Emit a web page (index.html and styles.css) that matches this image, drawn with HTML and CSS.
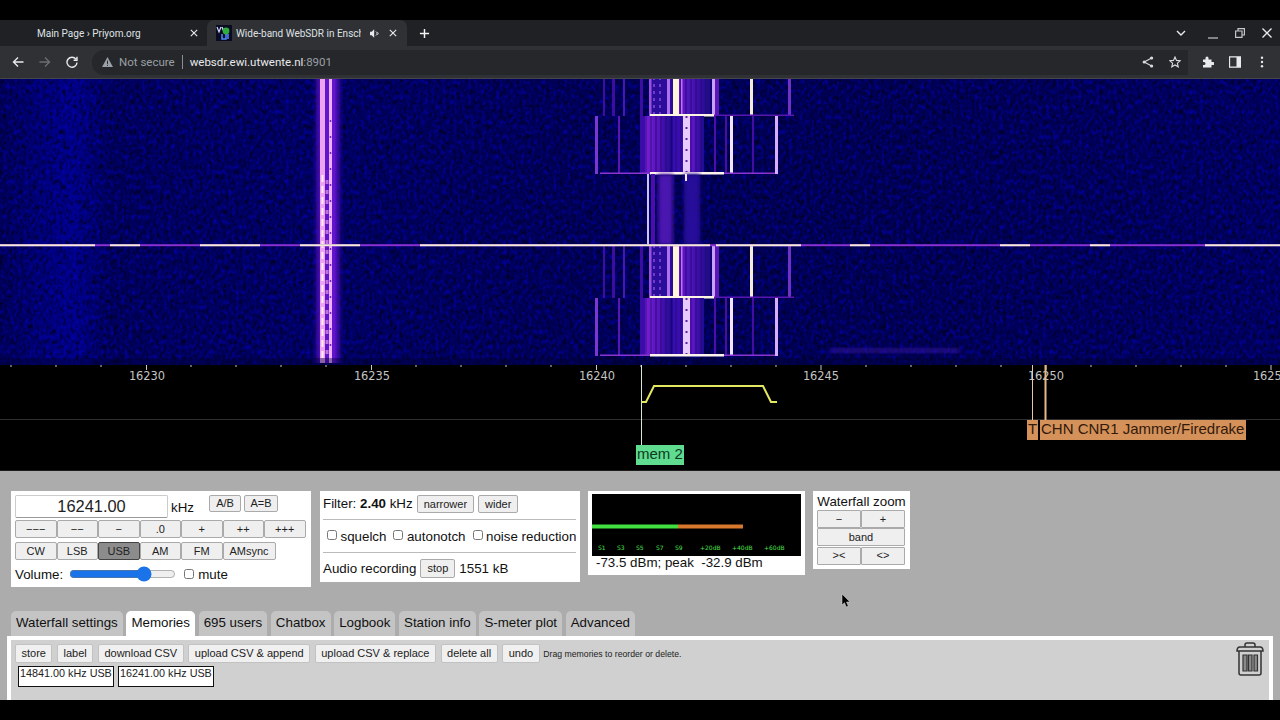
FILE: index.html
```html
<!DOCTYPE html>
<html lang="en">
<head>
<meta charset="utf-8">
<title>Wide-band WebSDR in Enschede</title>
<link rel="stylesheet" href="styles.css">
</head>
<body>
<div class="letterbox-top"></div>
<header class="tabstrip">
  <div class="tab">
    <span class="tab-title">Main Page › Priyom.org</span>
    <svg class="ico" viewBox="0 0 10 10"><path d="M1 1l8 8M9 1l-8 8" class="st-w"/></svg>
  </div>
  <div class="tab tab-active">
    <svg class="favicon" viewBox="0 0 16 16"><rect width="16" height="16" fill="#0a0a20"/><path d="M1 2l2 5 2-5M6 2l2 5" fill="none" stroke="#cfd8ff" stroke-width="1.2"/><circle cx="10" cy="6" r="3.4" fill="#2fae3f"/><path d="M6 9v5h4V9M12 9v5" fill="none" stroke="#4f8cff" stroke-width="1.5"/></svg>
    <span class="tab-title tab-title-active">Wide-band WebSDR in Enschede</span>
    <svg class="speaker" viewBox="0 0 12 10"><path d="M0 3h2l3-3v10L2 7H0z" fill="#e8eaed"/><path d="M7 2.500a3 3 0 010 5M9 3.500a2 2 0 010 3" stroke="#e8eaed" fill="none"/></svg>
    <svg class="ico" viewBox="0 0 10 10"><path d="M1 1l8 8M9 1l-8 8" class="st-w"/></svg>
  </div>
  <svg class="newtab" viewBox="0 0 12 12"><path d="M6 1v10M1 6h10" class="st-w2"/></svg>
  <div class="winctl">
    <svg class="w-ico" viewBox="0 0 10 6"><path d="M1 1l4 4 4-4" class="st-w"/></svg>
    <svg class="w-ico w-min" viewBox="0 0 10 10"><path d="M0 9h10" class="st-g"/></svg>
    <svg class="w-ico" viewBox="0 0 10 10"><path d="M3 3V.6h6.400V7H7M.6 3H7v6.400H.6z" class="st-g" fill="none"/></svg>
    <svg class="w-ico" viewBox="0 0 10 10"><path d="M.5.5l9 9M9.500.5l-9 9" class="st-w"/></svg>
  </div>
</header>
<nav class="toolbar">
  <svg class="nav" viewBox="0 0 12 12"><path d="M11.500 6H1.500M6 1.500L1.500 6 6 10.500" class="st-w"/></svg>
  <svg class="nav" viewBox="0 0 12 12"><path d="M.5 6h10M6 1.500L10.500 6 6 10.500" class="st-dim"/></svg>
  <svg class="nav" viewBox="0 0 12 12"><path d="M10 3.200A5 5 0 1011 6.500M11 .8v3.400H7.600" class="st-w" fill="none"/></svg>
  <div class="omnibox">
    <svg class="warn" viewBox="0 0 12 11"><path d="M6 0l6 11H0z" fill="#9aa0a6"/><path d="M6 4v3.600M6 8.600v1.200" stroke="#2a2b2e" stroke-width="1.100"/></svg>
    <span class="notsecure">Not secure</span>
    <span class="sep"></span>
    <span class="url">websdr.ewi.utwente.nl<span class="port">:8901</span></span>
    <span class="spacer"></span>
    <svg class="om-ico" viewBox="0 0 12 12"><circle cx="9.600" cy="2" r="1.600" fill="#dadce0"/><circle cx="2.200" cy="6" r="1.600" fill="#dadce0"/><circle cx="9.600" cy="10" r="1.600" fill="#dadce0"/><path d="M9.600 2L2.200 6l7.400 4" fill="none" stroke="#dadce0" stroke-width="1.100"/></svg>
    <svg class="om-ico" viewBox="0 0 12 12"><path d="M6 1l1.500 3.400 3.700.4-2.800 2.400.8 3.600L6 9l-3.200 1.800.8-3.600L.8 4.800l3.700-.4z" fill="none" stroke="#dadce0" stroke-width="1.100"/></svg>
  </div>
  <svg class="tb-ico" viewBox="0 0 12 12"><path d="M1 3.500h2.500V2a1.500 1.500 0 013 0v1.500H9.500V6H11a1.500 1.500 0 010 3H9.500v2.500H1V9h1a1.500 1.500 0 000-3H1z" fill="#e8eaed"/></svg>
  <svg class="tb-ico" viewBox="0 0 12 12"><path d="M.5.800h11v10.400H.5z" fill="none" stroke="#e8eaed" stroke-width="1.300"/><rect x="7.500" y="1" width="4" height="10" fill="#e8eaed"/></svg>
  <svg class="tb-ico" viewBox="0 0 12 12"><circle cx="6" cy="1.800" r="1.200" fill="#e8eaed"/><circle cx="6" cy="6" r="1.200" fill="#e8eaed"/><circle cx="6" cy="10.200" r="1.200" fill="#e8eaed"/></svg>
</nav>
<svg class="waterfall" viewBox="0 79 1280 286" preserveAspectRatio="none">
  <defs>
    <linearGradient id="glow" x1="0" x2="1" y1="0" y2="0">
      <stop offset="0" stop-color="#2a0ca0" stop-opacity="0"/>
      <stop offset=".28" stop-color="#6012c8"/>
      <stop offset=".72" stop-color="#6012c8"/>
      <stop offset="1" stop-color="#2a0ca0" stop-opacity="0"/>
    </linearGradient>
    <linearGradient id="hump" x1="0" x2="1" y1="0" y2="0">
      <stop offset="0" stop-color="#7a20d8"/>
      <stop offset=".5" stop-color="#5414b8"/>
      <stop offset="1" stop-color="#1c0890"/>
    </linearGradient>
    <linearGradient id="hump2" x1="0" x2="1" y1="0" y2="0">
      <stop offset="0" stop-color="#6a18d0"/>
      <stop offset="1" stop-color="#200a90"/>
    </linearGradient>
    <linearGradient id="hump3" x1="0" x2="1" y1="0" y2="0">
      <stop offset="0" stop-color="#6216c8"/>
      <stop offset=".6" stop-color="#3c10a8"/>
      <stop offset="1" stop-color="#160680"/>
    </linearGradient>
    <linearGradient id="side" x1="0" x2="1" y1="0" y2="0">
      <stop offset="0" stop-color="#000058"/>
      <stop offset=".035" stop-color="#00007c"/>
      <stop offset=".058" stop-color="#000090"/>
      <stop offset=".085" stop-color="#00005c"/>
      <stop offset=".24" stop-color="#000064"/>
      <stop offset=".47" stop-color="#000056"/>
      <stop offset=".7" stop-color="#000054"/>
      <stop offset="1" stop-color="#000060"/>
    </linearGradient>
    <pattern id="stripes" width="5" height="10" patternUnits="userSpaceOnUse">
      <rect width="2" height="10" fill="#12005a"/>
    </pattern>
    <filter id="noise" x="0" y="0" width="100%" height="100%" color-interpolation-filters="sRGB">
      <feTurbulence type="fractalNoise" baseFrequency="0.3 0.2" numOctaves="2" seed="4"/>
      <feColorMatrix values="0 0 0 0 0  0 0 0 0 0  0 0 0 0 0.12  2.2 0 0 0 -0.95"/>
      <feGaussianBlur stdDeviation="0.6"/>
    </filter>
    <filter id="noise2" x="0" y="0" width="100%" height="100%" color-interpolation-filters="sRGB">
      <feTurbulence type="fractalNoise" baseFrequency="0.28 0.2" numOctaves="2" seed="11"/>
      <feColorMatrix values="0 0 0 0 0.02  0 0 0 0 0  0 0 0 0 0.72  2.2 0 0 0 -1"/>
      <feGaussianBlur stdDeviation="0.6"/>
    </filter>
    <filter id="soft"><feGaussianBlur stdDeviation="0.75"/></filter>
    <filter id="soft2"><feGaussianBlur stdDeviation="2"/></filter>
    <g id="bandA">
      <rect x="603" width="2" height="53" fill="#3c10a0"/>
      <rect x="612" width="3" height="53" fill="#3c10a0"/>
      <rect x="623" width="2" height="53" fill="#4a12b0"/>
      <rect x="640" width="3" height="53" fill="#3a10a0"/>
      <rect x="650" width="26" height="53" fill="#2a0a98"/>
      <rect x="649" width="2.500" height="53" fill="#9a50e0"/>
      <path d="M654 0v53M660 0v53" stroke="#8a48e0" stroke-width="1.500" stroke-dasharray="3 4"/>
      <rect x="667" width="3" height="53" fill="#b070f0"/>
      <rect x="673" width="6" height="53" fill="#fff6d8"/>
      <rect x="679" width="33" height="53" fill="url(#hump3)"/>
      <rect x="679" width="33" height="53" fill="url(#stripes)" opacity=".3"/>
      <rect x="681" width="1.500" height="53" fill="#c070f0"/>
      <rect x="712" width="3" height="53" fill="#c8a0f8"/>
      <rect x="715" width="4" height="53" fill="#5a14b8"/>
      <rect x="750" width="3" height="53" fill="#f4ecd8"/>
      <rect x="788" width="3" height="53" fill="#7030c0"/>
      <rect x="650" y="51" width="64" height="2.500" fill="#fff6e4"/>
      <rect x="714" y="51.500" width="80" height="1.500" fill="#5a14b0"/>
    </g>
    <g id="bandB">
      <rect x="595" width="3" height="58" fill="#7a38d0"/>
      <rect x="618" width="2" height="58" fill="#5a18b0"/>
      <rect x="640" width="5" height="58" fill="#3a10a8"/>
      <rect x="645" width="28" height="58" fill="url(#hump)"/>
      <rect x="673" width="10" height="58" fill="#3a10b0"/>
      <rect x="645" width="38" height="58" fill="url(#stripes)" opacity=".3"/>
      <rect x="683" width="7" height="58" fill="#e8ccff"/>
      <path d="M686.500 0v58" stroke="#5a20a0" stroke-width="2" stroke-dasharray="2 9"/>
      <rect x="690" width="14" height="58" fill="url(#hump2)"/>
      <rect x="690" width="14" height="58" fill="url(#stripes)" opacity=".3"/>
      <rect x="714" width="2" height="58" fill="#5010a8"/>
      <rect x="725" width="2" height="58" fill="#4a10a0"/>
      <rect x="730" width="3" height="58" fill="#f2e6ff"/>
      <rect x="752" width="2" height="58" fill="#4210a0"/>
      <rect x="775" width="3" height="58" fill="#d8acff"/>
      <rect x="600" y="56.500" width="175" height="1.500" fill="#8a34d0"/>
      <rect x="650" y="56" width="74" height="2.500" fill="#fff4ec"/>
    </g>
  </defs>
  <rect y="79" width="1280" height="286" fill="url(#side)"/>
  <rect y="79" width="1280" height="286" filter="url(#noise)"/>
  <rect y="79" width="1280" height="286" filter="url(#noise2)" opacity=".8"/>
  <g filter="url(#soft)">
    <rect x="312" y="79" width="32" height="284" fill="url(#glow)"/>
    <rect x="320" y="79" width="5" height="284" fill="#eca4f2"/>
    <rect x="329" y="79" width="3" height="284" fill="#eeb0ff"/>
    <path d="M322.500 175v185" stroke="#ffeee8" stroke-width="2" stroke-dasharray="7 4"/>
    <path d="M327 180v180" stroke="#c070e0" stroke-width="3" stroke-dasharray="4 6"/>
    <path d="M330.500 120v240" stroke="#7a20c0" stroke-width="1.500" stroke-dasharray="2 14"/>
    <use href="#bandA" y="63"/>
    <use href="#bandB" y="116"/>
    <rect x="647" y="174" width="2" height="71" fill="#cfc0ff"/>
    <rect x="651" y="174" width="4" height="71" fill="#4a10b0"/>
    <rect x="658" y="174" width="15" height="71" fill="#4a12b0" filter="url(#soft2)"/>
    <rect x="684" y="174" width="16" height="71" fill="#26089a" filter="url(#soft2)"/>
    <rect x="685" y="174" width="2" height="7" fill="#f4ecff"/>
    <use href="#bandA" y="245"/>
    <use href="#bandB" y="298"/>
    <rect x="830" y="348" width="130" height="5" fill="#3a10a8" opacity=".6" filter="url(#soft2)"/>
    <rect y="244.200" width="1280" height="2" fill="#8a30d0"/>
    <path d="M0 245.200h95M110 245.200h30M200 245.200h60M300 245.200h60M420 245.200h290M716 245.200h85M850 245.200h20M1000 245.200h30M1090 245.200h20M1205 245.200h75" stroke="#f4ead8" stroke-width="2"/>
  </g>
  <rect y="358" width="1280" height="7" fill="#000030" opacity=".4"/>
</svg>
<section class="scale">
  <svg class="scale-svg" viewBox="0 365 1280 105">
    <path class="minor" d="M11 365v2M56 365v2M101 365v2M191 365v2M236 365v2M281 365v2M326 365v2M416 365v2M461 365v2M506 365v2M551 365v2M641 365v2M686 365v2M731 365v2M776 365v2M866 365v2M911 365v2M956 365v2M1001 365v2M1091 365v2M1136 365v2M1181 365v2M1226 365v2"/>
    <path class="minor" d="M146.500 365v5M371.500 365v5M596.500 365v5M821 365v5M1046 365v5M1271 365v5"/>
    <g class="scale-text">
      <text x="147" y="380">16230</text>
      <text x="372" y="380">16235</text>
      <text x="597" y="380">16240</text>
      <text x="821" y="380">16245</text>
      <text x="1046" y="380">16250</text>
      <text x="1271" y="380">16255</text>
    </g>
    <path d="M0 419.500h1280" stroke="#2e2e2e"/>
    <path d="M641.500 365v80" stroke="#d8e8d8"/>
    <path d="M1032.500 365v55" stroke="#e8c8a8"/>
    <path d="M1045.500 365v55" stroke="#e8b888" stroke-width="2"/>
    <path d="M641.500 402H646L654 386H763L771 402H777" fill="none" stroke="#e4e860" stroke-width="2"/>
  </svg>
  <span class="station station-mem">mem 2</span>
  <span class="station station-t">T</span>
  <span class="station station-chn">CHN CNR1 Jammer/Firedrake</span>
</section>
<main class="page">
  <div class="panels">
    <div class="panel panel-tune">
      <div class="row row-freq">
        <input class="freq" type="text" value="16241.00">
        <span class="khz">kHz</span>
        <button class="btn">A/B</button>
        <button class="btn">A=B</button>
      </div>
      <div class="grid7">
        <button class="btn">−−−</button><button class="btn">−−</button><button class="btn">−</button><button class="btn">.0</button><button class="btn">+</button><button class="btn">++</button><button class="btn">+++</button>
      </div>
      <div class="grid7 grid-modes">
        <button class="btn">CW</button><button class="btn">LSB</button><button class="btn btn-on">USB</button><button class="btn">AM</button><button class="btn">FM</button><button class="btn btn-wide">AMsync</button>
      </div>
      <div class="row row-vol">
        <span>Volume:</span>
        <input class="vol" type="range" min="0" max="100" value="73">
        <label class="chk chk-mute"><input type="checkbox">mute</label>
      </div>
    </div>
    <div class="panel panel-filter">
      <div class="row row-filter">
        <span>Filter: <b>2.40</b> kHz</span>
        <button class="btn">narrower</button>
        <button class="btn">wider</button>
      </div>
      <hr>
      <div class="row row-checks">
        <label class="chk"><input type="checkbox">squelch</label>
        <label class="chk"><input type="checkbox">autonotch</label>
        <label class="chk"><input type="checkbox">noise reduction</label>
      </div>
      <hr class="hr-flush">
      <div class="row row-rec">
        <span>Audio recording</span>
        <button class="btn btn-stop">stop</button>
        <span>1551 kB</span>
      </div>
    </div>
    <div class="panel panel-meter">
      <svg class="smeter" viewBox="0 0 209 62">
        <rect width="209" height="62" fill="#000"/>
        <rect y="30.500" width="86" height="4" fill="#3fe03f"/>
        <rect x="86" y="30.500" width="65" height="4" fill="#d8782c"/>
        <g class="meter-text">
          <text x="6" y="56">S1</text><text x="25" y="56">S3</text><text x="44" y="56">S5</text><text x="64" y="56">S7</text><text x="83" y="56">S9</text><text x="108" y="56">+20dB</text><text x="140" y="56">+40dB</text><text x="172" y="56">+60dB</text>
        </g>
      </svg>
      <div class="dbm">-73.5 dBm; peak&nbsp; -32.9 dBm</div>
    </div>
    <div class="panel panel-zoom">
      <div class="zoom-title">Waterfall zoom</div>
      <div class="zoom-grid">
        <button class="btn">−</button><button class="btn">+</button>
        <button class="btn btn-span">band</button>
        <button class="btn">&gt;&lt;</button><button class="btn">&lt;&gt;</button>
      </div>
    </div>
  </div>
  <div class="tabs">
    <span class="ptab">Waterfall settings</span>
    <span class="ptab ptab-on">Memories</span>
    <span class="ptab">695 users</span>
    <span class="ptab">Chatbox</span>
    <span class="ptab">Logbook</span>
    <span class="ptab">Station info</span>
    <span class="ptab">S-meter plot</span>
    <span class="ptab">Advanced</span>
  </div>
  <div class="memories">
    <div class="mem-actions">
      <button class="btn btn-mem">store</button>
      <button class="btn btn-mem">label</button>
      <button class="btn btn-mem">download CSV</button>
      <button class="btn btn-mem">upload CSV &amp; append</button>
      <button class="btn btn-mem">upload CSV &amp; replace</button>
      <button class="btn btn-mem">delete all</button>
      <button class="btn btn-mem">undo</button>
      <span class="hint">Drag memories to reorder or delete.</span>
    </div>
    <div class="mem-list">
      <div class="mem">14841.00 kHz USB</div>
      <div class="mem">16241.00 kHz USB</div>
    </div>
    <svg class="trash" viewBox="0 0 30 36"><path d="M10 6V4a2 2 0 012-2h6a2 2 0 012 2v2" fill="none" stroke="#333" stroke-width="1.500"/><path d="M2 10c0-3 1-4 3-4h20c2 0 3 1 3 4z" fill="none" stroke="#333" stroke-width="1.500"/><path d="M4 10v22a2 2 0 002 2h18a2 2 0 002-2V10" fill="none" stroke="#333" stroke-width="1.500"/><path d="M8 14h4v16H8zM13.500 14h3.500v16h-3.500zM19 14h3.500v16H19z" fill="#8a8a8a" stroke="#333" stroke-width="1.200"/></svg>
  </div>
  <svg class="cursor" viewBox="0 0 10 14"><path d="M1 0v11l2.500-2.300L5.300 13l2-.9-1.800-4.100H9z" fill="#000" stroke="#ddd" stroke-width=".5"/></svg>
</main>
<div class="letterbox-bottom"></div>
</body>
</html>
```
FILE: styles.css
```css
* { box-sizing: border-box; }
html, body { margin: 0; height: 720px; overflow: hidden; background: #000; }
body { display: flex; flex-direction: column; font-family: "Liberation Sans", Arial, sans-serif; font-size: 13.33px; color: #111; }
svg { display: block; }
.letterbox-top { height: 20px; flex: none; }
.letterbox-bottom { height: 20px; flex: none; background: #000; }

.st-w { stroke: #e8eaed; stroke-width: 1.4; fill: none; }
.st-w2 { stroke: #f1f3f4; stroke-width: 1.6; fill: none; }
.st-g { stroke: #c4c7ca; stroke-width: 1.2; }
.st-dim { stroke: #6b6e72; stroke-width: 1.4; fill: none; }

.tabstrip { height: 26px; flex: none; display: flex; align-items: stretch; background: #202124; font-family: Roboto, sans-serif; font-size: 10px; }
.tab { width: 207px; display: flex; align-items: center; padding: 0 9px 0 37px; color: #dfe1e5; }
.tab-active { width: 200px; padding: 0 10px 0 9px; background: #303134; border-radius: 7px 7px 0 0; }
.tab-title { flex: 1; min-width: 0; white-space: nowrap; overflow: hidden; }
.tab-title-active { margin-left: 4px; }
.favicon { width: 16px; height: 16px; flex: none; }
.ico { width: 8px; height: 8px; flex: none; }
.speaker { width: 10px; height: 9px; flex: none; margin: 0 9px 0 9px; }
.newtab { width: 11px; height: 11px; align-self: center; margin-left: 12px; }
.winctl { margin-left: auto; display: flex; align-items: center; gap: 17px; padding-right: 8px; }
.w-ico { width: 10px; height: 10px; }
.w-ico:first-child { height: 6px; margin-right: 5px; }
.w-min { margin-top: 2px; }

.toolbar { height: 33px; flex: none; display: flex; align-items: center; background: #303134; border-bottom: 1px solid #44464a; padding: 0 12px; font-family: Roboto, sans-serif; font-size: 11.5px; }
.nav { width: 12px; height: 12px; flex: none; margin-right: 15px; }
.nav:nth-child(3) { margin-right: 14px; }
.omnibox { flex: none; width: 1096px; height: 25px; border-radius: 12px 0 0 12px; background: #26272a; display: flex; align-items: center; padding: 0 0 0 10px; }
.warn { width: 11px; height: 10px; flex: none; margin-right: 6px; }
.notsecure { color: #9aa0a6; }
.sep { width: 1px; height: 14px; background: #8a8d91; margin: 0 7px; }
.url { color: #e8eaed; }
.port { color: #9aa0a6; }
.spacer { flex: 1; }
.om-ico { width: 12px; height: 12px; margin-right: 15px; }
.om-ico:last-child { margin-right: 7px; }
.tb-ico { width: 12px; height: 12px; flex: none; margin: 0 1px 0 14px; }

.waterfall { width: 1280px; height: 286px; flex: none; }
.scale { height: 106px; flex: none; position: relative; background: #000; border-bottom: 1px solid #1d1d1d; }
.scale-svg { width: 1280px; height: 105px; }
.minor { stroke: #c8c8c8; fill: none; }
.scale-text text { fill: #c4c4c4; font-family: "DejaVu Sans", sans-serif; font-size: 11.4px; text-anchor: middle; }
.station { position: absolute; height: 20px; line-height: 18px; font-size: 15px; white-space: nowrap; color: #32190a; padding-left: 1px; }
.station-mem { left: 636px; top: 80px; width: 48px; line-height: 17px; background: #5fdc90; color: #0d3a1e; }
.station-t { left: 1027px; top: 55px; width: 11px; background: #d4915a; }
.station-chn { left: 1040px; top: 55px; width: 206px; background: #d4915a; }

.page { flex: 1; min-height: 0; position: relative; background: #acacac; display: flex; flex-direction: column; }
.panels { display: flex; align-items: flex-start; gap: 8px; padding: 20px 0 0 11px; height: 140px; flex: none; }
.panel { background: #fff; padding: 4px; }
.row { display: flex; align-items: center; }
.btn { font-family: "Liberation Sans", Arial, sans-serif; font-size: 11px; line-height: 13px; height: 18px; padding: 1px 6px; color: #222; background: #efefef; border: 1px solid #aaa; border-radius: 2px; white-space: nowrap; }

.panel-tune { width: 300px; height: 96px; }
.row-freq { height: 23px; }
.freq { width: 153px; height: 23px; border: 1px solid #ccc; border-bottom-color: #999; border-radius: 2px; background: #fff; padding: 0; text-align: center; font-family: inherit; font-size: 16.400px; color: #222; }
.khz { margin: 2px 15px 0 3px; width: 23px; }
.row-freq .btn { height: 17px; margin: -6px 3px 0 0; }
.row-freq .btn:nth-of-type(1) { width: 32px; padding: 0; }
.row-freq .btn:nth-of-type(2) { width: 34px; padding: 0; }
.grid7 { display: grid; grid-template-columns: repeat(7, 41.500px); margin-top: 2px; }
.grid7 .btn { padding: 0; width: 100%; }
.grid-modes { margin-top: 4px; }
.grid-modes .btn-wide { width: 53px; }
.btn-on { background: #8c8c8c; border-color: #444; color: #222; }
.row-vol { margin-top: 4px; height: 20px; padding-top: 1px; }
.vol { width: 107px; height: 14px; margin: -2px 8px 0 6px; padding: 0; accent-color: #1a73e8; }
.chk { display: flex; align-items: center; }
.chk input { width: 10px; height: 10px; margin: -2px 4px 0 0; }

.panel-filter { width: 260px; height: 91px; margin-left: 1px; padding-left: 3px; }
.row-filter { height: 18px; gap: 4px; }
.row-filter span { margin-top: -2px; }
.panel-filter hr { border: 0; height: 1px; background: #bbb; margin: 6px 0 0; }
.panel-filter .hr-flush { margin-top: 0; }
.row-checks { height: 32px; padding-left: 3px; gap: 6px; white-space: nowrap; }
.row-checks .chk input { margin-right: 3.500px; margin-left: 1px; }
.row-rec { height: 30px; gap: 4px; }
.btn-stop { height: 19px; width: 35px; padding: 0; }

.panel-meter { width: 217px; height: 84px; padding: 3px 4px; }
.smeter { width: 209px; height: 62px; }
.meter-text text { fill: #4ae04a; font-family: "DejaVu Sans", sans-serif; font-size: 6px; }
.dbm { padding-left: 4px; line-height: 14px; }

.panel-zoom { width: 97px; height: 78px; }
.zoom-title { line-height: 13px; text-align: center; white-space: nowrap; height: 15px; }
.zoom-grid { display: grid; grid-template-columns: 44px 44px; grid-auto-rows: 18.300px; }
.zoom-grid .btn { padding: 0; height: 18px; border-radius: 1px; }
.btn-span { grid-column: span 2; }

.tabs { display: flex; gap: 3.700px; padding-left: 11px; height: 25px; flex: none; }
.ptab { padding: 0 5px; line-height: 24px; height: 25px; background: #c4c4c4; border-radius: 5px 5px 0 0; white-space: nowrap; color: #111; }
.ptab-on { background: #fff; }

.memories { flex: 1; min-height: 0; position: relative; margin: 0 7px; background: #d0d0d0; border: 4px solid #fff; border-bottom: 0; padding: 4px 4px 0; }
.mem-actions { display: flex; align-items: center; gap: 4.600px; height: 19px; }
.btn-mem { height: 19px; padding: 0 5.500px; background: #f0f0f0; border-color: #c2c2c2; }
.hint { font-size: 8.700px; color: #222; margin-left: -1px; }
.mem-list { display: flex; gap: 4px; margin: 3px 0 0 3px; }
.mem { width: 96px; height: 21px; background: #fff; border: 1px solid #111; font-size: 10.800px; line-height: 12px; padding-left: 1px; white-space: nowrap; color: #222; }
.trash { position: absolute; right: 4px; top: 1px; width: 30px; height: 36px; }
.cursor { position: absolute; left: 841px; top: 123px; width: 10px; height: 14px; }
```
